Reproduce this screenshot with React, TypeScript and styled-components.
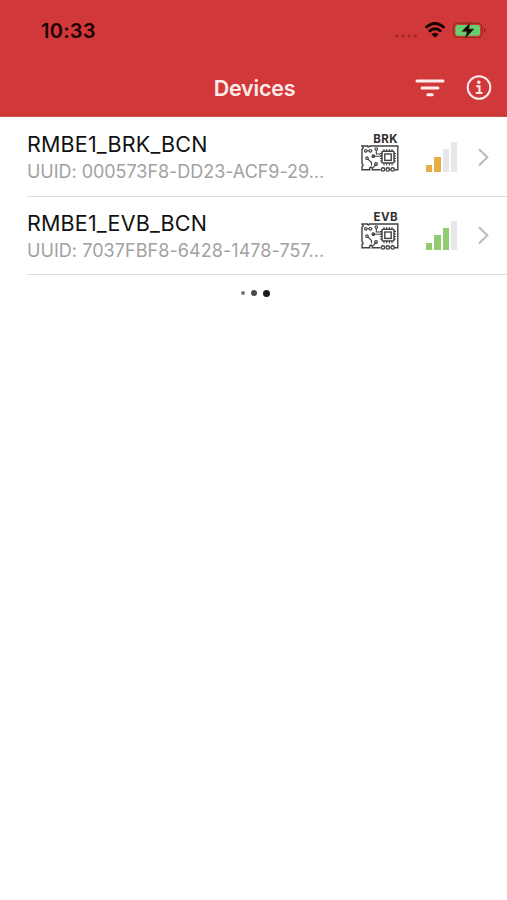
import React from "react";
import styled, { createGlobalStyle } from "styled-components";

const GlobalStyle = createGlobalStyle`
  * { box-sizing: border-box; }
  html, body { margin: 0; background: #fff; }
  body { font-family: Inter, "Liberation Sans", sans-serif; }
`;

const Screen = styled.main`
  display: flex;
  flex-direction: column;
  height: 900px;
  overflow: hidden;
  background: #fff;
`;

const Header = styled.header`
  height: 117px;
  background: #d1383a;
  border-bottom: 1px solid #bd5253;
`;

const StatusBar = styled.div`
  display: flex;
  align-items: center;
  justify-content: space-between;
  height: 60px;
  padding: 0 21px 0 41px;
`;

const Clock = styled.time`
  padding-top: 2px;
  font-size: 20px;
  font-weight: 600;
  line-height: 24px;
  letter-spacing: 0.25px;
  color: #1b0303;
`;

const StatusIcons = styled.div`
  display: flex;
  align-items: center;
`;

const NavBar = styled.nav`
  display: grid;
  grid-template-columns: 1fr auto 1fr;
  align-items: center;
  height: 56px;
  padding: 0 15px 0 17px;
`;

const Title = styled.h1`
  grid-column: 2;
  margin: 0;
  font-size: 21.5px;
  font-weight: 600;
  line-height: 28px;
  letter-spacing: -0.2px;
  color: #ffeaea;
`;

const NavActions = styled.div`
  display: flex;
  justify-content: flex-end;
  gap: 21px;
`;

const IconButton = styled.button`
  display: flex;
  align-items: center;
  padding: 0;
  border: 0;
  background: none;
`;

const DeviceList = styled.ul`
  margin: 0;
  padding: 0 0 0 27px;
  list-style: none;
`;

const DeviceRow = styled.li<{ $first: boolean }>`
  display: flex;
  height: ${(p) => (p.$first ? 80 : 78)}px;
  padding-top: ${(p) => (p.$first ? 1.5 : 0)}px;
  border-bottom: 1px solid #dfdfdf;
`;

const DeviceText = styled.div`
  width: 334px;
  padding-top: 12.6px;
`;

const DeviceName = styled.div`
  font-size: 21.5px;
  line-height: 27px;
  letter-spacing: 0.17px;
  color: #111;
`;

const DeviceId = styled.div<{ $spacing: number }>`
  font-size: 18px;
  line-height: 27px;
  letter-spacing: ${(p) => p.$spacing}px;
  white-space: nowrap;
  color: #a2a2a2;
`;

const Board = styled.div`
  display: flex;
  flex-direction: column;
  width: 38px;
  padding-top: 14px;
`;

const BoardLabel = styled.span`
  align-self: flex-end;
  padding-right: 1px;
  font-size: 11.5px;
  font-weight: 700;
  line-height: 12px;
  letter-spacing: 0.4px;
  color: #303030;
`;

const Signal = styled.div`
  display: flex;
  align-items: flex-end;
  gap: 2px;
  width: 52px;
  height: 53px;
  padding-left: 27px;
`;

const Bar = styled.i<{ $height: number; $color: string }>`
  flex: 0 0 6.3px;
  height: ${(p) => p.$height}px;
  background: ${(p) => p.$color};
`;

const Disclosure = styled.div`
  padding: 28px 0 0 26px;
`;

const Loader = styled.div`
  display: flex;
  align-items: center;
  justify-content: center;
  gap: 6px;
  height: 36px;
  padding-left: 4px;
`;

const Dot = styled.span<{ $size: number; $color: string }>`
  width: ${(p) => p.$size}px;
  height: ${(p) => p.$size}px;
  border-radius: 50%;
  background: ${(p) => p.$color};
`;

const StatusGlyphs = () => (
  <svg width="93" height="24" viewBox="393 18 93 24" fill="none">
    <g fill="#a02527">
      <circle cx="396.8" cy="36" r="1.6" />
      <circle cx="403" cy="36" r="1.6" />
      <circle cx="409.2" cy="36" r="1.6" />
      <circle cx="415.3" cy="36" r="1.6" />
    </g>
    <g stroke="#170202" strokeWidth="2.8">
      <path d="M425.7 27.7Q435 19.2 444.4 27.7" />
      <path d="M429 31.5Q435 25.9 441.2 31.5" />
    </g>
    <path d="M431.5 34.3Q435 31.2 438.7 34.3L435.1 37.8Z" fill="#170202" />
    <rect x="453.5" y="23.2" width="28.5" height="14.3" rx="4.2" stroke="#922b21" strokeWidth="1.2" />
    <rect x="455.5" y="25" width="24.5" height="10.8" rx="2.2" fill="#67cf70" />
    <path d="M484 28.2Q487 30 484 32.2Z" fill="#70191b" />
    <path d="M470.2 22.6L461.8 31.6H467L465.2 38.4L474 29H468.9Z" fill="#170202" stroke="#3b5427" strokeWidth=".6" />
  </svg>
);

const FilterIcon = () => (
  <svg width="30" height="26" viewBox="0 0 30 26" stroke="#ffeded" strokeWidth="3" strokeLinecap="round">
    <path d="M2 6H28M7 13H23M12.8 19.7H17.2" />
  </svg>
);

const InfoIcon = () => (
  <svg width="26" height="26" viewBox="0 0 26 26" fill="none" stroke="#ffeded">
    <circle cx="13" cy="12.5" r="11.3" strokeWidth="2" />
    <circle cx="12.8" cy="7.2" r="1.7" fill="#ffeded" stroke="none" />
    <path d="M10.2 11.3H13.5V17.7M9.8 17.9H16.5" strokeWidth="2" />
  </svg>
);

const BoardIcon = () => (
  <svg width="38" height="28" viewBox="0 0 38 28" fill="none" stroke="#424242" strokeWidth="1.4">
    <path d="M19.5 24.8H11.3Q12 22.5 10 22.3Q8 22.5 8.7 24.8H1V21.5Q3.3 20.5 1 18.8V4.2Q3.5 3.1 1 1.5V1H6.5Q7 3.2 8.5 1H36.8V24.8H33.5" />
    <g strokeWidth="1.1">
      <circle cx="4.8" cy="5.8" r="1.3" />
      <circle cx="9.3" cy="5.8" r="1.3" />
      <path d="M6.1 5.8H8M10.6 5.8H11.5M15.3 5V9H21M12.8 11.3H20M6.5 13.6L10.5 17.6V20.5M15 21V19M15.5 19L11.7 22.8" />
      <circle cx="15.3" cy="4" r="1.3" />
      <circle cx="12.3" cy="11.2" r="1.3" fill="#424242" />
      <circle cx="6" cy="13.2" r="1.3" />
      <circle cx="15" cy="19" r="1.4" />
    </g>
    <rect x="21" y="6.3" width="12" height="11.8" rx="1" strokeWidth="1.5" />
    <rect x="23.8" y="9" width="6.4" height="6.4" />
    <path d="M23 4V6M25.7 4V6M28.4 4V6M31 4V6M23 18V20.5M25.7 18V20.5M28.4 18V20.5M31 18V20.5M19 8.5H21M19 11H21M19 13.5H21M19 16H21M33 8.5H35M33 11H35M33 13.5H35M33 16H35" strokeWidth="1" />
    <circle cx="22" cy="24.4" r="1.7" />
    <circle cx="26.8" cy="24.4" r="1.7" />
    <circle cx="31.6" cy="24.4" r="1.7" />
  </svg>
);

const ChevronIcon = () => (
  <svg width="14" height="21" viewBox="0 0 14 21" fill="none" stroke="#bdbdbd" strokeWidth="2.2">
    <path d="M2 2.2L10.3 10.3L2 18.5" />
  </svg>
);

const devices = [
  { name: "RMBE1_BRK_BCN", id: "000573F8-DD23-ACF9-29...", kind: "BRK", level: 2, color: "#e5ad43", spacing: -0.04 },
  { name: "RMBE1_EVB_BCN", id: "7037FBF8-6428-1478-757...", kind: "EVB", level: 3, color: "#91cd70", spacing: 0.06 },
];
const barHeights = [7, 15, 22.5, 29.5];

export default function App() {
  return (
    <>
      <GlobalStyle />
      <Screen>
        <Header>
          <StatusBar>
            <Clock>10:33</Clock>
            <StatusIcons><StatusGlyphs /></StatusIcons>
          </StatusBar>
          <NavBar>
            <Title>Devices</Title>
            <NavActions>
              <IconButton aria-label="Filter"><FilterIcon /></IconButton>
              <IconButton aria-label="Information"><InfoIcon /></IconButton>
            </NavActions>
          </NavBar>
        </Header>
        <DeviceList>
          {devices.map((d, index) => (
            <DeviceRow key={d.name} $first={index === 0}>
              <DeviceText>
                <DeviceName>{d.name}</DeviceName>
                <DeviceId $spacing={d.spacing}>UUID: {d.id}</DeviceId>
              </DeviceText>
              <Board>
                <BoardLabel>{d.kind}</BoardLabel>
                <BoardIcon />
              </Board>
              <Signal>
                {barHeights.map((h, i) => (
                  <Bar key={h} $height={h} $color={i < d.level ? d.color : "#e7e7e9"} />
                ))}
              </Signal>
              <Disclosure><ChevronIcon /></Disclosure>
            </DeviceRow>
          ))}
        </DeviceList>
        <Loader>
          <Dot $size={4.5} $color="#777" />
          <Dot $size={6} $color="#4b4b4b" />
          <Dot $size={7} $color="#1c1c1c" />
        </Loader>
      </Screen>
    </>
  );
}
